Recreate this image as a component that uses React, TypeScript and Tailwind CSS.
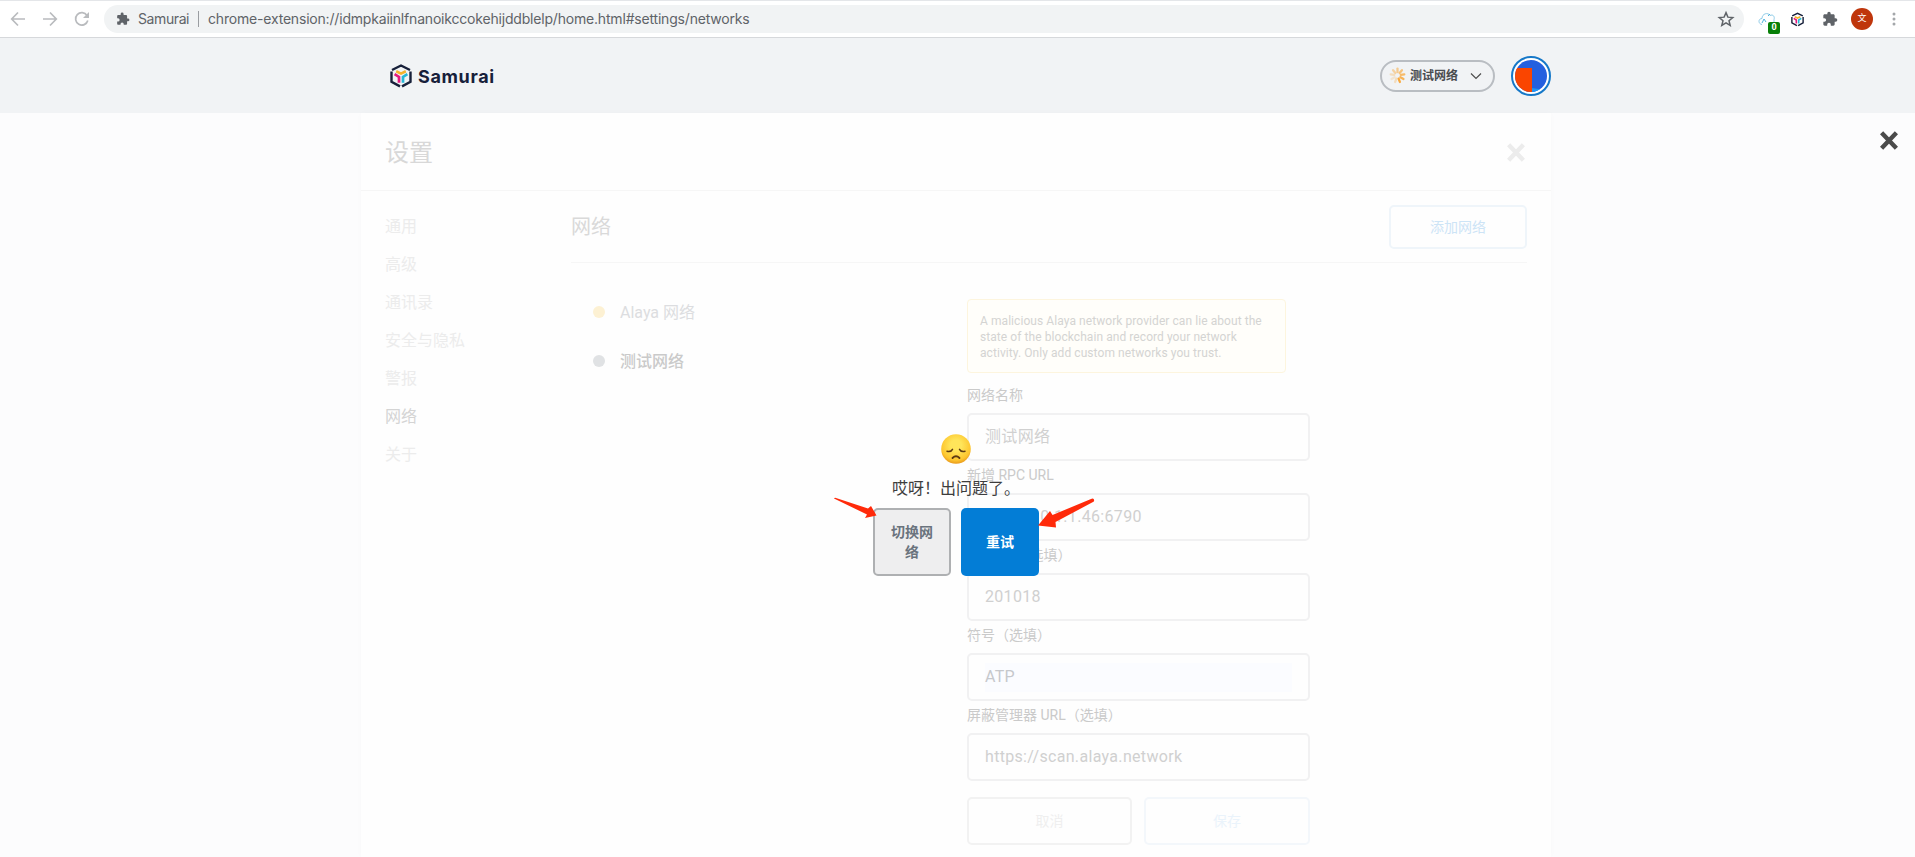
import React from 'react';

const Puzzle = ({ className }: { className: string }) => (
  <svg viewBox="0 0 24 24" className={className} fill="#5f6368">
    <path d="M20.5 11H19V7c0-1.1-.9-2-2-2h-4V3.500a2.500 2.500 0 0 0-5 0V5H4c-1.100 0-2 .9-2 2v3.800h1.500a2.700 2.700 0 0 1 0 5.400H2V20c0 1.100.9 2 2 2h3.800v-1.500a2.700 2.700 0 0 1 5.400 0V22H17c1.100 0 2-.9 2-2v-4h1.500a2.500 2.500 0 0 0 0-5z" />
  </svg>
);

const Cube = ({ className }: { className: string }) => (
  <svg viewBox="0 0 22 24" className={className} fill="none" strokeWidth="2.4">
    <path d="M2 6 11 1.500l9 4.500" stroke="#17203a" />
    <path d="M1.500 7.600v10.200L10 22.400M20.500 7.600v10.200L12 22.400" stroke="#17203a" />
    <path d="M6.200 7.300 11 9.600l4.800-2.300" stroke="#f6b32b" strokeWidth="2.700" />
    <path d="M4.600 10.200l4.400 2.700v5.800" stroke="#e5197e" strokeWidth="2.700" />
    <path d="M17.400 10.200 13 12.900v5.800" stroke="#27b7d6" strokeWidth="2.700" />
  </svg>
);

const Cross = ({ className }: { className: string }) => (
  <svg viewBox="0 0 18 19" className={className} fill="none" stroke="currentColor" strokeWidth="4.4">
    <path d="M1.600 1.700 16.400 17.300M16.400 1.700 1.600 17.300" />
  </svg>
);

const Arrow = ({ d }: { d: string }) => <path d={d} fill="#ff2a0a" />;

const spokes = [
  [0, 0.55], [40, 0.65], [80, 0.75], [120, 0.85], [160, 1], [200, 0.3], [240, 0.2], [280, 0.3], [320, 0.45],
];

const BrowserBar = () => (
  <div className="flex h-[38px] items-center border-t border-b border-t-[#e4e6e9] border-b-[#d6d8db] bg-white">
    <svg viewBox="0 0 104 36" className="h-9 w-[104px] shrink-0" fill="none" stroke="#b9bbbe" strokeWidth="1.7">
      <path d="M25 18H12M18 11.500 11.700 18l6.300 6.500" />
      <path d="M43 18h13M50 11.500l6.300 6.500-6.300 6.500" />
      <path d="M87 14.500a6.200 6.200 0 1 0 .8 5" />
      <path d="M89 11v6h-6z" fill="#b9bbbe" stroke="none" />
    </svg>
    <div className="flex h-7 w-[1640px] items-center rounded-full bg-[#f1f3f4] pl-3 pr-[9px] font-['Inter',sans-serif] text-[14px] text-[#5f6368]">
      <Puzzle className="h-[14px] w-[14px]" />
      <span className="ml-2 w-[53px] whitespace-nowrap pb-px tracking-[-0.4px]">Samurai</span>
      <span className="ml-[7px] h-4 w-px bg-[#9a9da1]" />
      <span className="ml-[9px] flex-1 whitespace-nowrap pb-px tracking-[-0.19px]">chrome-extension://idmpkaiinlfnanoikccokehijddblelp/home.html#settings/networks</span>
      <svg viewBox="0 0 24 24" className="h-[18px] w-[18px]" fill="none" stroke="#5f6368" strokeWidth="2">
        <path d="M12 3.500l2.500 6 6.500.5-5 4.200 1.600 6.300-5.600-3.400-5.600 3.400L8 14.200 3 10l6.500-.5z" />
      </svg>
    </div>
    <div className="relative ml-[13px] h-6 w-[24px]">
      <svg viewBox="0 0 24 24" className="h-6 w-6" fill="none" stroke="#8ecbe8" strokeWidth="1">
        <path d="M5 17.500c-4-.5-4-6 0-6 0-5 6-6.500 8-3 3-1.500 5 1 4 4v3" />
        <path d="M5 16l2-4 2 3M11 9l2-2" stroke="#4fb3de" />
      </svg>
      <span className="absolute left-[11px] top-[15px] flex h-3 w-3 items-center justify-center rounded-[2px] bg-[#088008] text-[9px] font-bold text-white">0</span>
    </div>
    <Cube className="ml-[10px] h-[15px] w-[13px]" />
    <Puzzle className="ml-[18px] h-4 w-4" />
    <span className="ml-[13px] flex h-[22px] w-[22px] items-center justify-center rounded-full bg-[#bf360c] text-[9px] text-white">文</span>
    <svg viewBox="0 0 4 14" className="ml-[19px] h-[14px] w-1" fill="#a4a7aa">
      <circle cx="2" cy="2" r="1.5" /><circle cx="2" cy="7" r="1.5" /><circle cx="2" cy="12" r="1.5" />
    </svg>
  </div>
);

const AppHeader = () => (
  <header className="h-[75px] bg-[#f1f3f5]">
    <div className="flex h-full w-[1551px] items-center pl-[390px]">
      <Cube className="h-6 w-[22px]" />
      <span className="ml-[6px] pt-px font-['Inter',sans-serif] text-[18px] font-bold tracking-[0.65px] text-[#17203a]">Samurai</span>
      <div className="ml-auto flex h-8 w-[115px] items-center rounded-full border-2 border-[#b9bdc2] pl-[7px]">
        <svg viewBox="-9 -9 18 18" className="h-[17px] w-[17px]">
          {spokes.map(([a, o]) => (
            <path key={a} d="M0-3.500V-7.300" stroke="#f9a93c" strokeWidth="2.400" strokeLinecap="round" opacity={o} transform={`rotate(${a})`} />
          ))}
        </svg>
        <span className="ml-[4px] pt-px text-[12px] font-bold text-[#4a4d50]">测试网络</span>
        <svg viewBox="0 0 12 8" className="ml-[12px] h-2 w-3" fill="none" stroke="#4d4d4d" strokeWidth="1.2"><path d="M1 1.500l5 5 5-5" /></svg>
      </div>
      <div className="ml-4 flex h-10 w-10 items-center justify-center rounded-full border-2 border-[#1678c8] bg-white">
        <svg viewBox="0 0 32 32" className="h-8 w-8">
          <defs><clipPath id="disc"><circle cx="16" cy="16" r="16" /></clipPath></defs>
          <g clipPath="url(#disc)">
            <rect width="32" height="32" fill="#2460df" />
            <path d="M16 28l16 2v4H14z" fill="#2196f3" />
            <rect y="8" width="17" height="26" fill="#fa4500" />
          </g>
        </svg>
      </div>
    </div>
  </header>
);

const nav = ['通用', '高级', '通讯录', '安全与隐私', '警报', '网络', '关于'];

const Field = ({ label, value, filled }: { label: string; value: string; filled?: boolean }) => (
  <label className="flex h-20 flex-col">
    <span className="flex h-8 items-center pb-[4px] text-[14px] text-[#cacaca]">{label}</span>
    <span className="flex h-12 items-center rounded-[5px] border-2 border-[#f1f1f2] px-4 text-[16px] tracking-[0.32px] text-[#d0d0d0]">
      <span className={filled ? 'h-[29px] w-full bg-[#fbfcff] leading-[28px] text-[#c6c8cc]' : 'h-[29px] w-full leading-[28px]'}>{value}</span>
    </span>
  </label>
);

const Settings = () => (
  <section className="flex h-full w-[1190px] flex-col bg-[#fefefe] shadow-[0_0_7px_rgba(0,0,0,0.02)]">
    <div className="flex h-[78px] items-center justify-between border-b border-[#f6f6f6] pl-6 pr-[26px] pt-[2px]">
      <h1 className="text-[24px] leading-9 text-[#d8d8d8]">设置</h1>
      <Cross className="h-[19px] w-[18px] text-[#ececec]" />
    </div>
    <div className="flex flex-1">
      <nav className="flex w-[210px] flex-col pl-6 pt-[17px]">
        {nav.map((n) => (
          <span key={n} className={n === '网络' ? 'flex h-[38px] items-center text-[16px] text-[#d4d4d4]' : 'flex h-[38px] items-center text-[16px] text-[#ececec]'}>{n}</span>
        ))}
      </nav>
      <div className="w-[956px]">
        <div className="flex h-[72px] items-center justify-between border-b border-[#f6f6f6]">
          <h2 className="pt-[1px] text-[20px] text-[#d9d9d9]">网络</h2>
          <button className="h-11 w-[138px] rounded-[5px] border-2 border-[#eff5fa] pt-[1px] text-[14px] text-[#cde4f6]">添加网络</button>
        </div>
        <div className="flex pt-[36px]">
          <ul className="w-[396px] pl-[22px] text-[16px]">
            <li className="-mt-[12px] flex h-[49px] items-center text-[#dcdde0]"><span className="mr-[15px] h-3 w-3 rounded-full bg-[#fdf1d3]" /><span className="pt-[2px]">Alaya 网络</span></li>
            <li className="flex h-[49px] items-center font-medium text-[#cacaca]"><span className="mr-[15px] h-3 w-3 rounded-full bg-[#e0e2e4]" /><span className="pt-[2px]">测试网络</span></li>
          </ul>
          <div className="w-[343px]">
            <p className="mb-2 h-[74px] w-[319px] whitespace-nowrap rounded-[4px] border border-[#fdf5de] bg-[#fffefa] pl-3 pt-[13px] text-[12px] leading-4 tracking-[0.07px] text-[#d4d4d2]">
              A malicious Alaya network provider can lie about the<br />state of the blockchain and record your network<br />activity. Only add custom networks you trust.
            </p>
            <Field label="网络名称" value="测试网络" />
            <Field label="新增 RPC URL" value="http://10.1.1.46:6790" />
            <Field label="ChainID（选填）" value="201018" />
            <Field label="符号（选填）" value="ATP" filled />
            <Field label="屏蔽管理器 URL（选填）" value="https://scan.alaya.network" />
            <div className="mt-4 flex justify-between text-[14px]">
              <button className="h-12 w-[165px] rounded-[5px] border-2 border-[#f2f2f2] text-[#efefef]">取消</button>
              <button className="h-12 w-[166px] rounded-[5px] border-2 border-[#f3f7fb] text-[#eaf3fb]">保存</button>
            </div>
          </div>
        </div>
      </div>
    </div>
  </section>
);

const Sad = () => (
  <svg viewBox="0 0 30 30" className="h-[30px] w-[30px]">
    <defs>
      <radialGradient id="face" cx="50%" cy="38%" r="62%"><stop offset="0.3" stopColor="#ffe55a" /><stop offset="0.8" stopColor="#fdc62f" /><stop offset="1" stopColor="#e99a1c" /></radialGradient>
    </defs>
    <circle cx="15" cy="15" r="14.800" fill="url(#face)" />
    <g fill="none" stroke="#5c3a12" strokeWidth="1.500" strokeLinecap="round">
      <path d="M6 17.300q4 1 5.500-2M24 17.300q-4 1-5.500-2" />
      <path d="M11.500 24q3.500-3.500 7 0" strokeWidth="1.800" />
    </g>
  </svg>
);

export default function App() {
  return (
    <div className="flex h-[857px] w-[1915px] flex-col overflow-hidden bg-[#fcfcfd] font-['Roboto','Noto_Sans_CJK_SC',sans-serif]">
      <BrowserBar />
      <AppHeader />
      <main className="relative h-[744px]">
        <div className="flex h-full pl-[361px]"><Settings /></div>
        <div className="absolute inset-0">
          <Cross className="absolute left-[1880px] top-[18px] h-[19px] w-[18px] text-[#4a4a4a]" />
          <div className="flex flex-col items-center pr-[3px] pt-[321px]">
            <Sad />
            <p className="mt-[13px] text-[16px] leading-6 text-[#3d3d3d]">哎呀！出问题了。</p>
            <div className="mt-[7px] flex gap-[10px] text-[14px] font-medium leading-5">
              <button className="h-[68px] w-[78px] rounded-[5px] border-2 border-[#aeb0b2] bg-[#eeeeef] px-4 font-bold text-[#6a737d]">切换网络</button>
              <button className="h-[68px] w-[78px] rounded-[5px] bg-[#037dd6] font-bold text-white">重试</button>
            </div>
          </div>
          <svg viewBox="830 490 270 45" className="absolute left-[830px] top-[377px] h-[45px] w-[270px]">
            <Arrow d="M834 498.500Q834.500 497.500 836 498L868 508.500 871 506 876.500 515.500 865 518 867 514.500Z" />
            <Arrow d="M1094 499.500Q1094.500 501.500 1093 502L1055.500 522 1056 527.500 1038 525.500 1050 511 1052.500 515 1091 499Q1093 498 1094 499.500Z" />
          </svg>
        </div>
      </main>
    </div>
  );
}
